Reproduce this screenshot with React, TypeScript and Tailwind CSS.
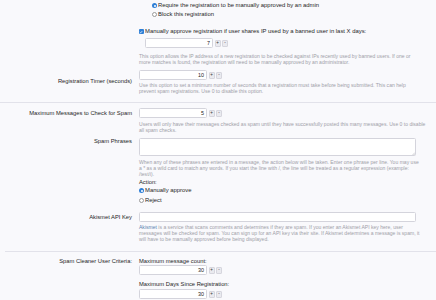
import React from "react";

const font = { fontFamily: '"Liberation Sans", Arial, sans-serif' };

function Radio({ checked, label }: { checked?: boolean; label: string }) {
  return (
    <div className="flex h-[9px] items-center gap-[1px]">
      {checked ? (
        <span className="flex h-[5px] w-[5px] items-center justify-center rounded-full bg-[#2f7fd6]">
          <span className="h-[2px] w-[2px] rounded-full bg-white" />
        </span>
      ) : (
        <span className="h-[5px] w-[5px] rounded-full border-[0.5px] border-[#9a9a9a] bg-white" />
      )}
      <span className="text-[5.9px] text-[#1e1e1e]">{label}</span>
    </div>
  );
}

function Spinner({ value, className = "" }: { value: string; className?: string }) {
  return (
    <div className={`flex items-center ${className}`}>
      <div className="flex h-[10px] w-[68px] items-center justify-end rounded-[1.5px] border-[0.5px] border-[#d4d4dc] bg-white pr-[2px] text-[5.4px] text-[#222]">
        {value}
      </div>
      <span className="ml-[1.5px] flex h-[7px] w-[6px] items-center justify-center rounded-[1px] border-[0.5px] border-[#d6d6de] bg-[#eaeaef] text-[4.5px] leading-none text-[#333]">
        +
      </span>
      <span className="ml-[1.5px] flex h-[7px] w-[6px] items-center justify-center rounded-[1px] border-[0.5px] border-[#d6d6de] bg-[#eaeaef] text-[4.5px] leading-none text-[#333]">
        -
      </span>
    </div>
  );
}

function Help({ children, className = "" }: { children: React.ReactNode; className?: string }) {
  return (
    <p className={`whitespace-nowrap text-[5.05px] leading-[6px] text-[#a0a0a8] ${className}`}>{children}</p>
  );
}

function Label({ children, className = "" }: { children?: React.ReactNode; className?: string }) {
  return (
    <div className={`w-[132px] shrink-0 whitespace-nowrap text-right text-[5.8px] leading-[7px] text-[#262626] ${className}`}>
      {children}
    </div>
  );
}

function Row({ label, labelClass = "", children, className = "" }: { label?: string; labelClass?: string; children: React.ReactNode; className?: string }) {
  return (
    <div className={`flex ${className}`}>
      <Label className={labelClass}>{label}</Label>
      <div className="ml-[7px] min-w-0 flex-1">{children}</div>
    </div>
  );
}

export default function App() {
  return (
    <div className="h-[300px] w-[436px] overflow-hidden bg-[#f9f9fc]" style={font}>
      {/* Registration section (continued) */}
      <div className="border-b-[0.5px] border-[#e2e2ea] pb-[8px]">
        <Row>
          <div className="pl-[13px] pt-[1px]">
            <Radio checked label="Require the registration to be manually approved by an admin" />
            <Radio label="Block this registration" />
          </div>

          <div className="mt-[8px] flex h-[9px] items-center gap-[1.5px]">
            <span className="flex h-[4.5px] w-[4.5px] items-center justify-center rounded-[1px] bg-[#2f7fd6]">
              <svg viewBox="0 0 10 10" className="h-[4px] w-[4px]">
                <path d="M2 5.2 L4.2 7.3 L8 2.8" fill="none" stroke="white" strokeWidth="1.8" />
              </svg>
            </span>
            <span className="text-[5.9px] text-[#1e1e1e]">
              Manually approve registration if user shares IP used by a banned user in last X days:
            </span>
          </div>
          <Spinner value="7" className="ml-[6px] mt-[2px]" />
          <Help className="mt-[5px]">
            This option allows the IP address of a new registration to be checked against IPs recently used by banned users. If one or
            <br />
            more matches is found, the registration will need to be manually approved by an administrator.
          </Help>
        </Row>

        <Row label="Registration Timer (seconds)" labelClass="pt-[7.5px]" className="mt-[5px]">
          <Spinner value="10" />
          <Help className="mt-[2px]">
            Use this option to set a minimum number of seconds that a registration must take before being submitted. This can help
            <br />
            prevent spam registrations. Use 0 to disable this option.
          </Help>
        </Row>
      </div>

      {/* Spam checks */}
      <div className="ml-[5px] border-b-[0.5px] border-[#e2e2ea] pb-[9px]">
        <div className="-ml-[5px]">
          <Row label="Maximum Messages to Check for Spam" labelClass="pt-[1.5px]" className="mt-[5px]">
            <Spinner value="5" />
            <Help className="mt-[3px]">
              Users will only have their messages checked as spam until they have successfully posted this many messages. Use 0 to disable
              <br />
              all spam checks.
            </Help>
          </Row>

          <Row label="Spam Phrases" className="mt-[5px]">
            <div className="relative h-[18px] w-[277px] rounded-[1.5px] border-[0.5px] border-[#d4d4dc] bg-white">
              <svg viewBox="0 0 6 6" className="absolute bottom-[0.5px] right-[0.5px] h-[3px] w-[3px]">
                <path d="M1 6 L6 1 M3.5 6 L6 3.5" stroke="#9a9aa2" strokeWidth="0.8" />
              </svg>
            </div>
            <Help className="mt-[3px]">
              When any of these phrases are entered in a message, the action below will be taken. Enter one phrase per line. You may use
              <br />
              a * as a wild card to match any words. If you start the line with /, the line will be treated as a regular expression (example:
              <br />
              /test/i).
            </Help>
            <div className="mt-[2px] h-[6px] text-[5.8px] leading-[6px] text-[#1e1e1e]">Action:</div>
            <div className="mt-[1px]">
              <Radio checked label="Manually approve" />
            </div>
            <div className="mt-[1px]">
              <Radio label="Reject" />
            </div>
          </Row>

          <Row label="Akismet API Key" labelClass="pt-[1.5px]" className="mt-[7px]">
            <div className="h-[10px] w-[277px] rounded-[1.5px] border-[0.5px] border-[#d4d4dc] bg-white" />
            <Help className="mt-[2px]">
              <span className="text-[#5b82b0]">Akismet</span> is a service that scans comments and determines if they are spam. If you enter an Akismet API key here, user
              <br />
              messages will be checked for spam. You can sign up for an API key via their site. If Akismet determines a message is spam, it
              <br />
              will have to be manually approved before being displayed.
            </Help>
          </Row>
        </div>
      </div>

      {/* Spam cleaner */}
      <Row label="Spam Cleaner User Criteria:" labelClass="pt-[6px]">
        <div className="mt-[6px] h-[7px] text-[5.8px] leading-[7px] text-[#1e1e1e]">Maximum message count:</div>
        <Spinner value="30" />
        <div className="mt-[6px] h-[7px] text-[5.8px] leading-[7px] text-[#1e1e1e]">Maximum Days Since Registration:</div>
        <Spinner value="30" className="mt-[1px]" />
      </Row>
    </div>
  );
}
